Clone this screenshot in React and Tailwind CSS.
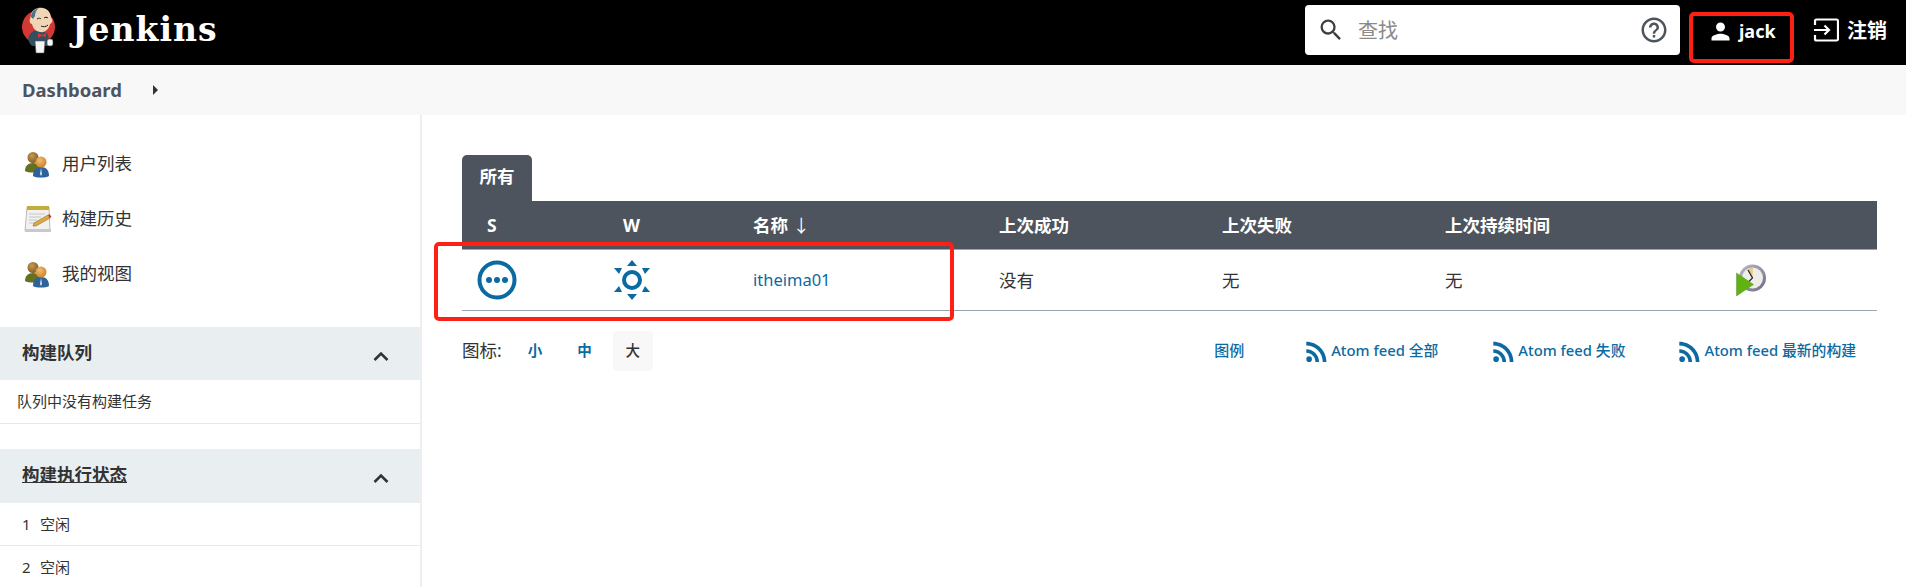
import React from "react";

const font = { fontFamily: '"Noto Sans", "Noto Sans CJK SC", sans-serif' };

function JenkinsLogo() {
  return (
    <svg width="34" height="48" viewBox="0 0 34 48" className="shrink-0">
      <circle cx="16.5" cy="21" r="16.5" fill="#d33833" />
      <path d="M6 33c1-6 6-9 10-9l9 3c2 3 2 8 1 13H10c-2-2-3-4-4-7z" fill="#335061" />
      <path d="M9 9c1-6 7-8 12-7 5 1 8 5 8 10 2 1 2 5-1 6-1 5-5 9-10 8-5-1-7-4-8-8-2 0-3-3-2-5z" fill="#f0d6b7" />
      <path d="M9 11c0-5 4-8 8-9-3 2-4 5-4 8l-2 3z" fill="#49728b" />
      <path d="M15 13c2-1 3-1 4 0M22 12c1-1 3-1 4 0M19 20c2 1 5 1 7-1" fill="none" stroke="#231f20" strokeWidth="1" />
      <path d="M16 27l4 2 4-2v4l-4-1-4 2z" fill="#d33833" />
      <path d="M13 35h10l-1 12H14z" fill="#f5f5f5" stroke="#555" strokeWidth=".6" />
      <rect x="25" y="33" width="6" height="7" rx="2" fill="#f5f5f5" stroke="#333" strokeWidth=".6" />
    </svg>
  );
}

function PeopleIcon() {
  return (
    <svg width="28" height="28" viewBox="0 0 28 28" className="shrink-0">
      <defs>
        <radialGradient id="headA" cx="40%" cy="35%" r="70%">
          <stop offset="0" stopColor="#c99a55" />
          <stop offset="1" stopColor="#7b5a22" />
        </radialGradient>
        <radialGradient id="headB" cx="40%" cy="35%" r="70%">
          <stop offset="0" stopColor="#f2bd6e" />
          <stop offset="1" stopColor="#c9812a" />
        </radialGradient>
      </defs>
      <path d="M1 21c0-5 3-8 8-8s8 3 8 8c-3 2-13 2-16 0z" fill="#64711f" />
      <circle cx="9" cy="7.5" r="5.5" fill="url(#headA)" />
      <path d="M9 26c0-6 3-9 8-9s8 3 8 9c-3 2-13 2-16 0z" fill="#2e6399" />
      <path d="M17 18l-1 6 1 2 1-2z" fill="#dfe8f2" />
      <circle cx="17" cy="12" r="5.5" fill="url(#headB)" />
    </svg>
  );
}

function NotepadIcon() {
  return (
    <svg width="28" height="28" viewBox="0 0 28 28" className="shrink-0">
      <path d="M3 2h22l1 24H1z" fill="#f1f1ef" stroke="#aaa" strokeWidth=".8" />
      <rect x="1" y="24" width="26" height="3" fill="#c9c9c9" />
      <rect x="3" y="1" width="22" height="4" fill="#c5ad3d" />
      <path d="M5 9h16M5 12h12M5 15h8M5 18h6" stroke="#c6c6c6" strokeWidth="1" />
      <path d="M9 21l1-3L24 10l2 3-14 8z" fill="#e2a83c" stroke="#7b5a22" strokeWidth=".5" />
      <path d="M24 10l2 3 1.500-1-2-3z" fill="#d8312a" />
    </svg>
  );
}

function ClockIcon() {
  return (
    <svg width="30" height="32" viewBox="0 0 30 32" className="shrink-0">
      <defs>
        <linearGradient id="clockRing" x1="0" y1="0" x2="1" y2="1">
          <stop offset="0" stopColor="#bdbacb" />
          <stop offset="1" stopColor="#6e6984" />
        </linearGradient>
      </defs>
      <circle cx="16.5" cy="14" r="13.500" fill="url(#clockRing)" />
      <circle cx="16.5" cy="14" r="10.500" fill="#eeede8" />
      <path d="M16.500 14L11 5a10 10 0 0 1 6-1z" fill="#e6cf8c" />
      <path d="M12 6l4.500 8-4 4" fill="none" stroke="#222" strokeWidth="1.200" />
      <path d="M0.500 9l17 11.500L0.500 32z" fill="#5fb30e" stroke="#6f9a4a" strokeWidth=".6" />
    </svg>
  );
}

function StatusIcon() {
  return (
    <svg width="40" height="40" viewBox="0 0 40 40" className="shrink-0">
      <circle cx="20" cy="20" r="17.500" fill="none" stroke="#0b6aa2" strokeWidth="4" />
      <circle cx="12" cy="20" r="3" fill="#0b6aa2" />
      <circle cx="20" cy="20" r="3" fill="#0b6aa2" />
      <circle cx="28" cy="20" r="3" fill="#0b6aa2" />
    </svg>
  );
}

function WeatherIcon() {
  return (
    <svg width="36" height="40" viewBox="0 0 36 40" className="shrink-0">
      <circle cx="18" cy="20" r="8" fill="none" stroke="#0b6aa2" strokeWidth="4" />
      <path d="M18 0l5 6H13zM18 40l-5-6h10zM0 8h8l-3 6zM36 8h-8l3 6zM0 32h8l-3-6zM36 32h-8l3-6z" fill="#0b6aa2" />
    </svg>
  );
}

function Rss() {
  return (
    <svg width="22" height="22" viewBox="3 3 17 17" fill="#0b6aa2" className="shrink-0">
      <path d="M6.180 15.640a2.180 2.180 0 1 1 0 4.360 2.180 2.180 0 0 1 0-4.360zM4 4.440v2.830c7.030 0 12.730 5.700 12.730 12.730h2.830c0-8.590-6.970-15.560-15.560-15.560zm0 5.660v2.830c3.900 0 7.070 3.170 7.070 7.070h2.830c0-5.470-4.430-9.900-9.900-9.900z" />
    </svg>
  );
}

function Chevron() {
  return (
    <svg width="16" height="10" viewBox="0 0 16 10" fill="none" stroke="#333" strokeWidth="2.600" className="mt-[4px]">
      <path d="M1.500 9L8 2.500 14.500 9" />
    </svg>
  );
}

const sideLinks = [
  { label: "用户列表", icon: <PeopleIcon /> },
  { label: "构建历史", icon: <NotepadIcon /> },
  { label: "我的视图", icon: <PeopleIcon /> },
];

const feeds = [
  { label: "Atom feed 全部", cls: "ml-[61px]" },
  { label: "Atom feed 失败", cls: "ml-[54px]" },
  { label: "Atom feed 最新的构建", cls: "ml-[53px]" },
];

export default function App() {
  return (
    <div style={font} className="flex h-[587px] w-[1906px] flex-col overflow-hidden bg-white text-[17.500px] text-[#333]">
      {/* Header */}
      <header className="flex h-[65px] shrink-0 items-center bg-black pr-[19px] text-white">
        <div className="ml-[22px] mt-[-6px] flex items-center">
          <JenkinsLogo />
          <span style={{ fontFamily: '"DejaVu Serif", serif' }} className="ml-[16px] text-[33px] font-bold leading-none tracking-[1px]">
            Jenkins
          </span>
        </div>

        <div className="ml-auto mt-[-5px] flex h-[50px] w-[375px] items-center rounded-[4px] bg-white pl-[12px] pr-[11px]">
          <svg width="28" height="28" viewBox="0 0 24 24" fill="#3d3d3d" className="shrink-0">
            <path d="M15.500 14h-.790l-.280-.270A6.470 6.470 0 0 0 16 9.500 6.500 6.500 0 1 0 9.500 16c1.610 0 3.090-.590 4.230-1.570l.270.280v.790l5 4.990L20.490 19l-4.990-5zm-6 0C7.010 14 5 11.990 5 9.500S7.010 5 9.500 5 14 7.010 14 9.500 11.990 14 9.500 14z" />
          </svg>
          <span className="ml-[13px] mt-[2px] text-[20px] text-[#8a8a8a]">查找</span>
          <svg width="30" height="30" viewBox="0 0 24 24" fill="#4d545d" className="ml-auto shrink-0">
            <path d="M11 18h2v-2h-2v2zm1-16C6.480 2 2 6.480 2 12s4.480 10 10 10 10-4.480 10-10S17.520 2 12 2zm0 18c-4.410 0-8-3.590-8-8s3.590-8 8-8 8 3.590 8 8-3.590 8-8 8zm0-14c-2.210 0-4 1.790-4 4h2c0-1.100.900-2 2-2s2 .900 2 2c0 2-3 1.750-3 5h2c0-2.250 3-2.500 3-5 0-2.210-1.790-4-4-4z" />
          </svg>
        </div>

        <div className="ml-[9px] mt-[10px] flex h-[51px] w-[105px] items-start rounded-[5px] border-4 border-[#ff2015] pl-[14px] pt-[2px]">
          <svg width="27" height="27" viewBox="0 0 24 24" fill="#fff" className="shrink-0">
            <path d="M12 12c2.210 0 4-1.790 4-4s-1.790-4-4-4-4 1.790-4 4 1.790 4 4 4zm0 2c-2.670 0-8 1.340-8 4v2h16v-2c0-2.660-5.330-4-8-4z" />
          </svg>
          <span className="ml-[5px] text-[18px] font-bold leading-[26px]">jack</span>
        </div>

        <div className="ml-[19px] mt-[-5px] flex items-center">
          <svg width="26" height="24" viewBox="0 0 26 24" fill="none" stroke="#fff" strokeWidth="2.200" className="shrink-0">
            <path d="M2 7V3a1.500 1.500 0 0 1 1.500-1.500h20A1.500 1.500 0 0 1 25 3v18a1.500 1.500 0 0 1-1.500 1.500h-20A1.500 1.500 0 0 1 2 21v-4" />
            <path d="M1 12h15M11.500 7.500L16 12l-4.500 4.500" />
          </svg>
          <span className="ml-[8px] mt-[2px] text-[20px] font-bold">注销</span>
        </div>
      </header>

      {/* Breadcrumb */}
      <div className="flex h-[50px] shrink-0 items-center bg-[#f8f8f8] pl-[22px]">
        <span className="w-[131px] text-[18.500px] font-bold text-[#4d545d]">Dashboard</span>
        <span className="h-0 w-0 border-y-[5px] border-l-[5px] border-y-transparent border-l-[#333]" />
      </div>

      <div className="flex min-h-0 flex-1">
        {/* Sidebar */}
        <aside className="w-[422px] shrink-0 border-r-2 border-[#eeeeee] pt-[21px]">
          {sideLinks.map((l) => (
            <div key={l.label} className="flex h-[55px] items-center pl-[24px]">
              {l.icon}
              <span className="ml-[10px]">{l.label}</span>
            </div>
          ))}

          <div className="mt-[26px] flex h-[53px] items-center justify-between bg-[#e9eef1] pl-[22px] pr-[31px]">
            <span className="mt-[-2px] font-bold">构建队列</span>
            <Chevron />
          </div>
          <div className="flex h-[44px] items-center border-b border-[#e8e8e8] pl-[17px] text-[15px]">队列中没有构建任务</div>

          <div className="mt-[25px] flex h-[54px] items-center justify-between bg-[#e9eef1] pl-[22px] pr-[31px]">
            <span className="mt-[-3px] font-bold underline">构建执行状态</span>
            <Chevron />
          </div>
          <div className="flex h-[43px] items-center border-b border-[#e8e8e8] pl-[22px] pt-[1px] text-[15px]">
            <span className="w-[18px]">1</span>空闲
          </div>
          <div className="flex h-[41px] items-center pl-[22px] pt-[1px] text-[15px]">
            <span className="w-[18px]">2</span>空闲
          </div>
        </aside>

        {/* Main */}
        <main className="min-w-0 flex-1 pl-[40px] pr-[29px] pt-[40px]">
          <div className="flex h-[46px] w-[70px] items-start justify-center rounded-t-[5px] bg-[#4d545d] pt-[9px] font-bold leading-[24px] text-white">
            所有
          </div>

          <div className="relative">
            <div className="grid h-[49px] grid-cols-[136px_130px_246px_223px_223px_291px_1fr] items-center border-b border-[#9aa5ae] bg-[#4d545d] pl-[25px] font-bold text-white">
              <span>S</span>
              <span>W</span>
              <span>
                名称 <span className="font-normal">↓</span>
              </span>
              <span>上次成功</span>
              <span>上次失败</span>
              <span>上次持续时间</span>
              <span />
            </div>

            <div className="grid h-[61px] grid-cols-[138px_138px_246px_223px_223px_291px_1fr] items-center border-b border-[#9aa5ae] pl-[15px]">
              <StatusIcon />
              <div className="ml-[-1px]">
                <WeatherIcon />
              </div>
              <a className="text-[16.500px] text-[#0b6aa2]">itheima01</a>
              <span>没有</span>
              <span>无</span>
              <span>无</span>
              <ClockIcon />
            </div>

            {/* red annotation */}
            <div className="pointer-events-none absolute left-[-28px] top-[41px] h-[79px] w-[520px] rounded-[5px] border-4 border-[#ff2015]" />
          </div>

          <div className="mt-[19px] flex h-[41px] items-center">
            <span>图标:</span>
            <span className="ml-[26px] text-[14.500px] font-bold text-[#0b6aa2]">小</span>
            <span className="ml-[35px] text-[14.500px] font-bold text-[#0b6aa2]">中</span>
            <span className="ml-[21px] flex h-[40px] w-[40px] items-center justify-center rounded-[4px] bg-[#f8f8f8] text-[14.500px] font-medium text-[#333]">
              大
            </span>

            <span className="ml-auto text-[15px] font-medium text-[#0b6aa2]">图例</span>
            {feeds.map((f) => (
              <span key={f.label} className={`${f.cls} flex items-center text-[14.800px] font-medium text-[#0b6aa2]`}>
                <Rss />
                <span className="ml-[4px]">{f.label}</span>
              </span>
            ))}
            <span className="w-[21px] shrink-0" />
          </div>
        </main>
      </div>
    </div>
  );
}
